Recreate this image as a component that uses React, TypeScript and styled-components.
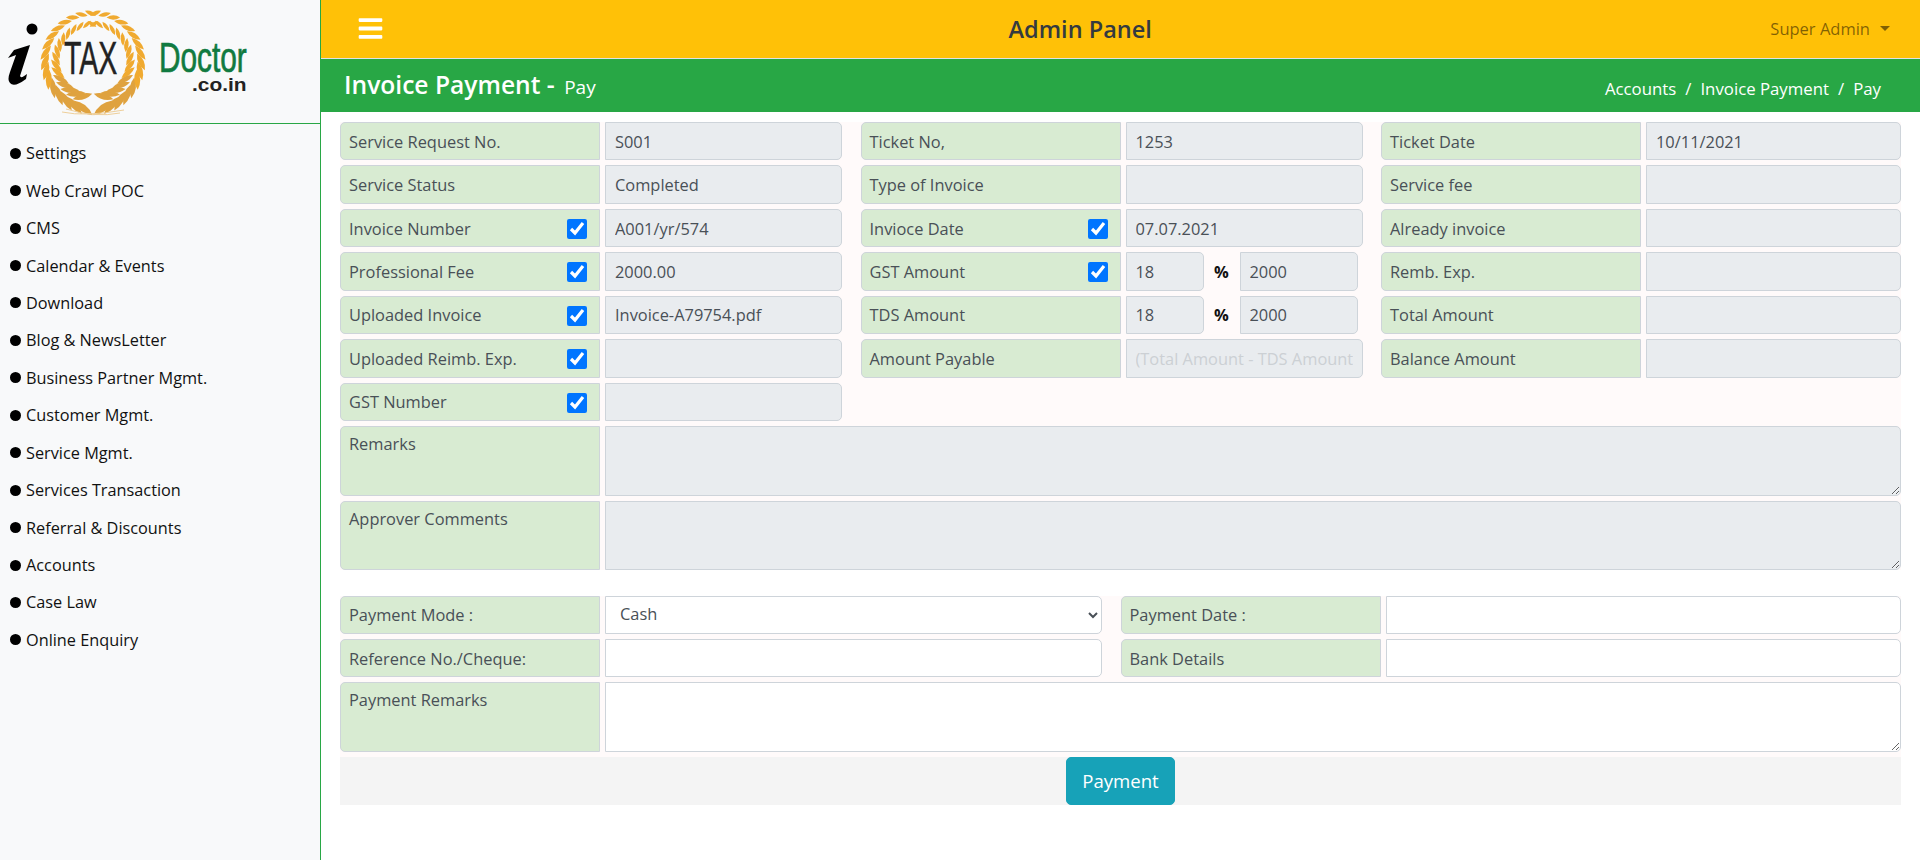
import React from 'react'
import styled, { createGlobalStyle } from 'styled-components'
import { FaBars } from 'react-icons/fa'

const GlobalStyle = createGlobalStyle`
  html, body { margin: 0; padding: 0; background: #fff; }
  body { font-family: "Open Sans", "Noto Sans", Arial, sans-serif; font-size: 16.4px; color: #212529; }
  * { box-sizing: border-box; }
`

const Page = styled.div`
  display: flex;
  height: 860px;
  overflow: hidden;
`
const Sidebar = styled.aside`
  width: 321px;
  flex: none;
  background: #f8f9fa;
  border-right: 1px solid #28a745;
`
const LogoBox = styled.div`
  height: 124px;
  border-bottom: 1px solid #28a745;
  svg { display: block; }
`
const Menu = styled.ul`
  list-style: none;
  margin: 0;
  padding: 10.5px 0 0 10px;
`
const MenuItem = styled.li`
  display: flex;
  align-items: center;
  height: 37.45px;
  font-size: 16.3px;
  color: #111;
  &::before {
    content: '';
    width: 11px;
    height: 11px;
    margin-right: 5px;
    border-radius: 50%;
    background: #000;
  }
`
const Main = styled.main`
  flex: 1;
  min-width: 0;
`
const TopBar = styled.header`
  display: flex;
  justify-content: space-between;
  align-items: center;
  height: 59px;
  padding: 0 30px 1px 36px;
  background: #ffc107;
  border-bottom: 1px solid #dee2e6;
`
const MenuButton = styled.span`
  display: flex;
  color: #fff;
  font-size: 27px;
`
const PanelTitle = styled.div`
  margin-left: 6px;
  font-size: 23.5px;
  font-weight: 600;
  color: #343a40;
`
const UserMenu = styled.div`
  display: flex;
  align-items: center;
  font-size: 16.5px;
  color: rgba(0, 0, 0, 0.5);
  &::after {
    content: '';
    margin-left: 10px;
    border-top: 5px solid rgba(0, 0, 0, 0.5);
    border-left: 5px solid transparent;
    border-right: 5px solid transparent;
  }
`
const TitleBar = styled.div`
  display: flex;
  justify-content: space-between;
  height: 53px;
  padding: 0 39px 0 23px;
  background: #28a745;
  color: #fff;
`
const Title = styled.h1`
  margin: 0 0 2px;
  align-self: center;
  font-size: 24.6px;
  font-weight: 600;
  small {
    font-size: 19px;
    font-weight: 400;
    margin-left: 3px;
  }
`
const Crumbs = styled.div`
  align-self: center;
  padding-top: 5px;
  font-size: 16.8px;
  span { margin: 0 9px; }
`
const Content = styled.div`
  padding: 10px 19px 0;
`
const Block = styled.section`
  display: flex;
  flex-direction: column;
  gap: 5px;
  background: #fffafa;
  & + & { margin-top: 25.4px; }
`
const Row = styled.div<{ $cols: string }>`
  display: grid;
  grid-template-columns: ${p => p.$cols};
  column-gap: 18.5px;
`
const Field = styled.div<{ $tall?: boolean }>`
  display: grid;
  grid-template-columns: 260px 1fr;
  column-gap: 5px;
  height: ${p => (p.$tall ? '69.6px' : '38.43px')};
`
const Label = styled.label<{ $tall?: boolean }>`
  display: flex;
  justify-content: space-between;
  align-items: ${p => (p.$tall ? 'flex-start' : 'center')};
  padding: ${p => (p.$tall ? '5px 12px 0 8px' : '0 12px 0 8px')};
  font-size: 16.4px;
  color: #495057;
  background: #d8ebd2;
  border: 1px solid #ced4da;
  border-radius: 5px 0 0 5px;
`
const Check = styled.input`
  width: 20px;
  height: 20px;
  margin: 2px 0 0;
`
const control = `
  width: 100%;
  height: 100%;
  min-width: 0;
  padding: 0 9px;
  font-family: inherit;
  font-size: 16.4px;
  color: #495057;
  border: 1px solid #ced4da;
  border-radius: 0 5px 5px 0;
  outline: none;
`
const Value = styled.input<{ $open?: boolean }>`
  ${control}
  background: ${p => (p.$open ? '#fff' : '#e9ecef')};
  &::placeholder { color: #ccd0d4; opacity: 1; }
`
const Area = styled.textarea<{ $open?: boolean }>`
  ${control}
  display: block;
  background: ${p => (p.$open ? '#fff' : '#e9ecef')};
`
const Picker = styled.select`
  ${control}
  padding: 0 9px 3px 10px;
  background: #fff;
`
const Percent = styled.div`
  display: grid;
  grid-template-columns: 78px 1fr 118px;
  align-items: center;
  margin-right: 5px;
  b {
    text-align: center;
    font-size: 16.4px;
    color: #111;
  }
`
const ButtonBar = styled.div`
  display: flex;
  justify-content: center;
  background: #f4f4f4;
`
const PayButton = styled.button`
  width: 109px;
  height: 48px;
  font-family: inherit;
  font-size: 18.6px;
  color: #fff;
  background: #17a2b8;
  border: 1px solid #17a2b8;
  border-radius: 5px;
`

const LEAF_COUNT = 16
const leaves = Array.from({ length: LEAF_COUNT }, (_, i) => {
  const t = i / (LEAF_COUNT - 1)
  const a = ((168 - t * 165) * Math.PI) / 180
  const dir = (Math.atan2(-Math.sin(a), -Math.cos(a)) * 180) / Math.PI
  return { a, dir, len: 24 - t * 12, wid: 7 - t * 3, fill: t < 0.3 ? '#dfa23f' : '#f0aa30' }
})

const leafPath = (len: number, wid: number) =>
  `M${-len / 2} 0 Q0 ${-wid} ${len / 2} 0 Q0 ${wid} ${-len / 2} 0Z`

function Laurel() {
  const cx = 93
  const cy = 61
  return (
    <g>
      {leaves.map((l, i) => {
        const outer = [cx + 48 * Math.sin(l.a), cy - 48 * Math.cos(l.a)]
        const inner = [cx + 37 * Math.sin(l.a - 0.08), cy - 37 * Math.cos(l.a - 0.08)]
        return (
          <g key={i} fill={l.fill}>
            <path d={leafPath(l.len, l.wid)} transform={`translate(${outer[0]} ${outer[1]}) rotate(${l.dir - 26})`} />
            <path d={leafPath(l.len * 0.85, l.wid * 0.85)} transform={`translate(${inner[0]} ${inner[1]}) rotate(${l.dir + 28})`} />
          </g>
        )
      })}
    </g>
  )
}

function Logo() {
  return (
    <svg width="320" height="123" viewBox="0 0 320 123">
      <circle cx="32" cy="29" r="5.5" fill="#000" />
      <path d="M14 50 L30 45 L20 76 Q21 79 27 74 L26 79 Q14 88 10 83 Q7 80 10 72 L16 55 L8 58 Z" fill="#000" />
      <g transform="translate(186 0) scale(-1 1)">
        <Laurel />
      </g>
      <Laurel />
      <path d="M62 112 Q85 117 124 110 M66 109 Q95 118 120 113" stroke="#eecf9a" strokeWidth="1" fill="none" />
      <text transform="translate(64 74) scale(0.62 1)" fontFamily="'Liberation Sans', sans-serif" fontSize="46" fill="#222" stroke="#222" strokeWidth="0.5">TAX</text>
      <text transform="translate(159 72) scale(0.71 1)" fontFamily="'Liberation Sans', sans-serif" fontSize="42" fill="#107a40" stroke="#107a40" strokeWidth="0.7">Doctor</text>
      <text transform="translate(192 91) scale(1.1 1)" fontFamily="'Liberation Sans', sans-serif" fontWeight="700" fontSize="19" fill="#222">.co.in</text>
    </svg>
  )
}

type Cell = { label: string; value?: string; checked?: boolean; hint?: string; pct?: boolean }

const rows: Cell[][] = [
  [{ label: 'Service Request No.', value: 'S001' }, { label: 'Ticket No,', value: '1253' }, { label: 'Ticket Date', value: '10/11/2021' }],
  [{ label: 'Service Status', value: 'Completed' }, { label: 'Type of Invoice' }, { label: 'Service fee' }],
  [{ label: 'Invoice Number', value: 'A001/yr/574', checked: true }, { label: 'Invioce Date', value: '07.07.2021', checked: true }, { label: 'Already invoice' }],
  [{ label: 'Professional Fee', value: '2000.00', checked: true }, { label: 'GST Amount', checked: true, pct: true }, { label: 'Remb. Exp.' }],
  [{ label: 'Uploaded Invoice', value: 'Invoice-A79754.pdf', checked: true }, { label: 'TDS Amount', pct: true }, { label: 'Total Amount' }],
  [{ label: 'Uploaded Reimb. Exp.', checked: true }, { label: 'Amount Payable', hint: '(Total Amount - TDS Amount)' }, { label: 'Balance Amount' }],
  [{ label: 'GST Number', checked: true }],
]

const menu = ['Settings', 'Web Crawl POC', 'CMS', 'Calendar & Events', 'Download', 'Blog & NewsLetter', 'Business Partner Mgmt.', 'Customer Mgmt.', 'Service Mgmt.', 'Services Transaction', 'Referral & Discounts', 'Accounts', 'Case Law', 'Online Enquiry']

const TOP_COLS = '502px 502px 520px'
const PAY_COLS = '762px 1fr'

function FieldCell({ cell }: { cell: Cell }) {
  return (
    <Field>
      <Label>
        {cell.label}
        {cell.checked && <Check type="checkbox" defaultChecked />}
      </Label>
      {cell.pct ? (
        <Percent>
          <Value disabled value="18" readOnly />
          <b>%</b>
          <Value disabled value="2000" readOnly />
        </Percent>
      ) : (
        <Value disabled value={cell.value ?? ''} placeholder={cell.hint} readOnly />
      )}
    </Field>
  )
}

export default function App() {
  return (
    <Page>
      <GlobalStyle />
      <Sidebar>
        <LogoBox><Logo /></LogoBox>
        <Menu>
          {menu.map(m => <MenuItem key={m}>{m}</MenuItem>)}
        </Menu>
      </Sidebar>
      <Main>
        <TopBar>
          <MenuButton><FaBars /></MenuButton>
          <PanelTitle>Admin Panel</PanelTitle>
          <UserMenu>Super Admin</UserMenu>
        </TopBar>
        <TitleBar>
          <Title>Invoice Payment - <small>Pay</small></Title>
          <Crumbs>Accounts<span>/</span>Invoice Payment<span>/</span>Pay</Crumbs>
        </TitleBar>
        <Content>
          <Block>
            {rows.map((r, i) => (
              <Row key={i} $cols={TOP_COLS}>
                {r.map(c => <FieldCell key={c.label} cell={c} />)}
              </Row>
            ))}
            <Field $tall>
              <Label $tall>Remarks</Label>
              <Area disabled />
            </Field>
            <Field $tall>
              <Label $tall>Approver Comments</Label>
              <Area disabled />
            </Field>
          </Block>
          <Block>
            <Row $cols={PAY_COLS}>
              <Field>
                <Label>Payment Mode :</Label>
                <Picker defaultValue="Cash"><option>Cash</option></Picker>
              </Field>
              <Field>
                <Label>Payment Date :</Label>
                <Value $open />
              </Field>
            </Row>
            <Row $cols={PAY_COLS}>
              <Field>
                <Label>Reference No./Cheque:</Label>
                <Value $open />
              </Field>
              <Field>
                <Label>Bank Details</Label>
                <Value $open />
              </Field>
            </Row>
            <Field $tall>
              <Label $tall>Payment Remarks</Label>
              <Area $open />
            </Field>
            <ButtonBar><PayButton>Payment</PayButton></ButtonBar>
          </Block>
        </Content>
      </Main>
    </Page>
  )
}
